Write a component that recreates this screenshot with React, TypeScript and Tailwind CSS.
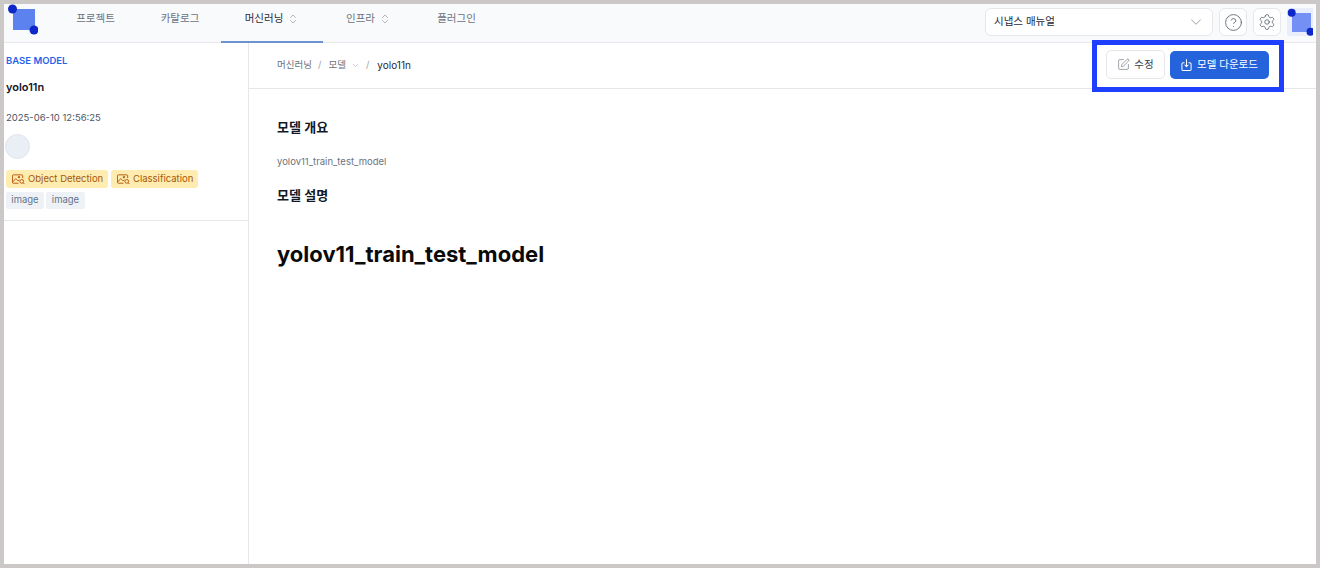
import React from "react";
import { ChevronDown, ChevronsUpDown, CircleHelp, Settings, SquarePen } from "lucide-react";

function Logo() {
  return (
    <svg width="34" height="34" viewBox="0 0 34 34" className="block">
      <rect x="9" y="5" width="22" height="21" fill="#5b82ee" />
      <circle cx="8.5" cy="5" r="4.5" fill="#0e27c9" />
      <circle cx="30" cy="26" r="4.5" fill="#0e27c9" />
    </svg>
  );
}

function Avatar() {
  return (
    <div className="w-[26px] h-[28px] bg-[#e9eefa] rounded-l-[3px] overflow-hidden shrink-0">
      <svg width="26" height="28" viewBox="0 0 26 28" className="block">
        <rect x="5" y="5" width="19" height="19" fill="#7590f5" />
        <circle cx="4.7" cy="4.7" r="4" fill="#0e27c9" />
        <circle cx="23.5" cy="23.7" r="4" fill="#0e27c9" />
      </svg>
    </div>
  );
}

function ImgIcon() {
  return (
    <svg width="13" height="11" viewBox="0 0 14 11" fill="none" stroke="#b45309" strokeWidth="1" className="shrink-0">
      <path d="M11.5 4V1.5a1 1 0 0 0-1-1h-9a1 1 0 0 0-1 1v7a1 1 0 0 0 1 1H7" />
      <path d="M1 8l3-3.5L6.5 7l1.5-1" />
      <circle cx="7.5" cy="3" r="0.8" fill="#b45309" />
      <circle cx="10.5" cy="7.5" r="2" />
      <path d="M12 9l1.5 1.5" />
    </svg>
  );
}

function DownloadIcon() {
  return (
    <svg width="11" height="14" viewBox="0 0 12 14" fill="none" stroke="white" strokeWidth="1.1" strokeLinecap="round" strokeLinejoin="round" className="shrink-0">
      <path d="M3.5 4.5H2.5a1.5 1.5 0 0 0-1.5 1.5v5.5a1.5 1.5 0 0 0 1.5 1.5h7a1.5 1.5 0 0 0 1.5-1.5V6a1.5 1.5 0 0 0-1.5-1.5h-1" />
      <path d="M6 1v7.5M4.2 7l1.8 1.8L7.8 7" />
    </svg>
  );
}

function NavItem({ label, active, chevrons, w }: { label: string; active?: boolean; chevrons?: boolean; w: string }) {
  return (
    <div className={`${w} h-[39px] flex items-center justify-center gap-[4px] pb-[7px] text-[10.5px] border-b-2 ${active ? "border-[#6a93cf] text-[#1f2937]" : "border-transparent text-[#6b7280]"}`}>
      <span>{label}</span>
      {chevrons && <ChevronsUpDown size={12} strokeWidth={1} className="text-[#6b7280]" />}
    </div>
  );
}

export default function App() {
  return (
    <div className="relative w-[1320px] h-[568px] border-4 border-[#cdc8c8] bg-white overflow-hidden flex flex-col font-['Inter','Noto_Sans_CJK_KR',sans-serif]">
      <header className="h-[39px] shrink-0 bg-[#f8fafc] border-b border-[#e5e7eb] flex items-start">
        <div className="w-[48px] h-[38px] shrink-0"><Logo /></div>
        <div className="flex">
          <NavItem label="프로젝트" w="w-[87px]" />
          <NavItem label="카탈로그" w="w-[82px]" />
          <NavItem label="머신러닝" active chevrons w="w-[102px]" />
          <NavItem label="인프라" chevrons w="w-[91px]" />
          <NavItem label="플러그인" w="w-[85px]" />
        </div>
        <div className="ml-auto flex items-center gap-[6px] pt-[4px] pr-[3px]">
          <div className="w-[228px] h-[28px] rounded-[6px] border border-[#e5e7eb] bg-white flex items-center justify-between pl-[8px] pr-[7px] text-[10.5px] text-[#1f2937]">
            <span>시냅스 매뉴얼</span>
            <ChevronDown size={18} strokeWidth={0.9} className="text-[#6b7280]" />
          </div>
          <div className="w-[28px] h-[28px] rounded-[6px] border border-[#e5e7eb] bg-white flex items-center justify-center">
            <CircleHelp size={19} strokeWidth={1} className="text-[#4b5563]" />
          </div>
          <div className="w-[28px] h-[28px] rounded-[6px] border border-[#e5e7eb] bg-white flex items-center justify-center">
            <Settings size={18} strokeWidth={1} className="text-[#4b5563]" />
          </div>
          <Avatar />
        </div>
      </header>

      <div className="flex-1 flex min-h-0">
        <aside className="w-[245px] shrink-0 border-r border-[#e5e7eb]">
          <div className="pl-[2px] pr-[6px] pt-[12px] pb-[12px] border-b border-[#e5e7eb] h-[178px]">
            <div className="text-[9.5px] leading-[12px] font-semibold text-[#2563eb]">BASE MODEL</div>
            <div className="mt-[13px] text-[11px] leading-[14px] font-semibold text-[#111827]">yolo11n</div>
            <div className="mt-[17px] text-[9.5px] leading-[14px] text-[#4b5563]">2025-06-10 12:56:25</div>
            <div className="mt-[9px] -ml-px w-[25px] h-[25px] rounded-full bg-[#e9eff5] border border-[#dfe5ec]" />
            <div className="mt-[11px] flex gap-[3px]">
              <div className="w-[102px] h-[18px] rounded-[3px] bg-[#feecb0] pl-[6px] flex items-center gap-[3px] text-[9.5px] text-[#a35a0c]">
                <ImgIcon /><span>Object Detection</span>
              </div>
              <div className="w-[87px] h-[18px] rounded-[3px] bg-[#feecb0] pl-[6px] flex items-center gap-[3px] text-[9.5px] text-[#a35a0c]">
                <ImgIcon /><span>Classification</span>
              </div>
            </div>
            <div className="mt-[4px] flex gap-[2px]">
              <div className="w-[38px] h-[17px] rounded-[2px] bg-[#eef2f6] flex items-center justify-center text-[9.5px] text-[#64748b]">image</div>
              <div className="w-[39px] h-[17px] rounded-[2px] bg-[#eef2f6] flex items-center justify-center text-[9.5px] text-[#64748b]">image</div>
            </div>
          </div>
        </aside>

        <main className="flex-1 min-w-0">
          <div className="h-[46px] border-b border-[#e5e7eb] flex items-center justify-between pl-[28px] pr-[47px]">
            <div className="flex items-center text-[9.5px] text-[#6b7280]">
              <span>머신러닝</span>
              <span className="mx-[6px] text-[#9ca3af]">/</span>
              <span className="ml-[1px]">모델</span>
              <ChevronDown size={9} strokeWidth={1} className="ml-[5px] text-[#6b7280]" />
              <span className="ml-[6px] mr-[8px] text-[#9ca3af]">/</span>
              <span className="text-[10px] text-[#1f2937]">yolo11n</span>
            </div>
            <div className="flex items-center gap-[5px] mb-[2px]">
              <div className="w-[59px] h-[29px] rounded-[5px] border border-[#e5e7eb] bg-white flex items-center justify-center gap-[5px] text-[10.5px] text-[#374151]">
                <SquarePen size={13} strokeWidth={1} className="text-[#4b5563]" />
                <span className="-ml-px">수정</span>
              </div>
              <div className="w-[99px] h-[28px] rounded-[5px] bg-[#2563dc] flex items-center justify-center gap-[5px] text-[10.5px] text-white">
                <DownloadIcon />
                <span>모델 다운로드</span>
              </div>
            </div>
          </div>
          <div className="pl-[28px] pt-[30px]">
            <h2 className="text-[13px] leading-[17px] font-semibold text-[#111827]">모델 개요</h2>
            <p className="mt-[19px] text-[9.5px] leading-[13px] text-[#6b7280]">yolov11_train_test_model</p>
            <h2 className="mt-[19px] text-[13px] leading-[17px] font-semibold text-[#111827]">모델 설명</h2>
            <h1 className="mt-[36px] text-[22px] leading-[28px] font-bold text-[#0a0a0a]">yolov11_train_test_model</h1>
          </div>
        </main>
      </div>

      <div className="absolute left-[1088px] top-[36px] w-[192px] h-[52px] border-[5px] border-[#1f3fff] pointer-events-none" />
    </div>
  );
}
